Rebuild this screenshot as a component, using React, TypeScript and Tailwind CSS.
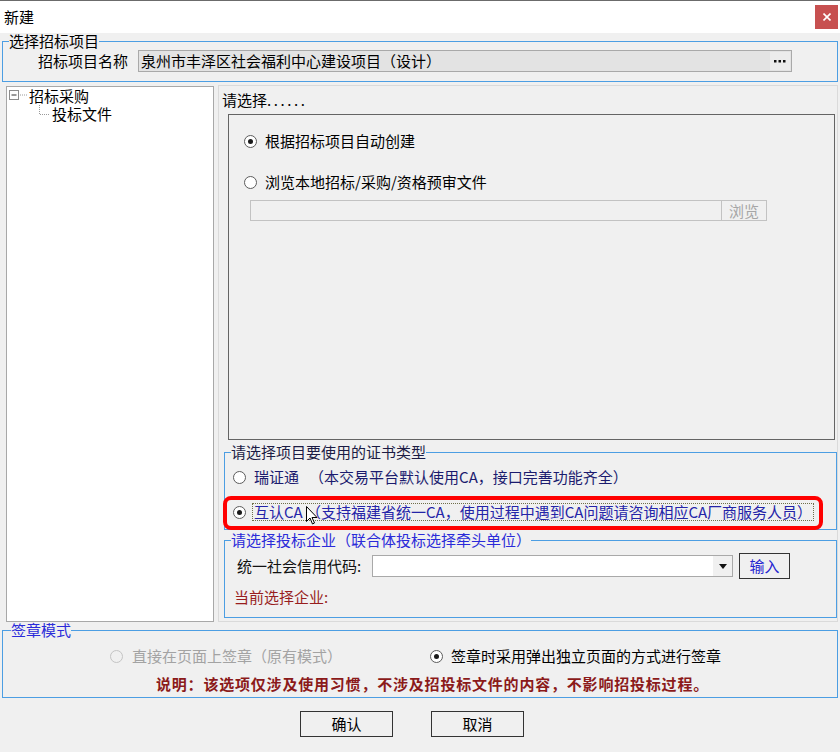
import type { ReactNode } from "react";

function Radio({ checked, disabled }: { checked?: boolean; disabled?: boolean }) {
  return (
    <span
      className={`flex h-[13px] w-[13px] shrink-0 items-center justify-center rounded-full border ${
        disabled ? "border-[#c4c4c4] bg-[#f0f0f0]" : "border-[#5c5c5c] bg-white"
      }`}
    >
      {checked && <span className="h-[5px] w-[5px] rounded-full bg-[#1a1a1a]" />}
    </span>
  );
}

function Group({
  title,
  titleClass,
  className,
  children,
}: {
  title: string;
  titleClass: string;
  className: string;
  children: ReactNode;
}) {
  return (
    <fieldset className={`border border-[#4c9ee3] ${className}`}>
      <legend className={`ml-[6px] text-[15px] leading-[16px] ${titleClass}`}>{title}</legend>
      {children}
    </fieldset>
  );
}

export default function App() {
  return (
    <div className="flex h-[752px] w-[840px] flex-col overflow-hidden border-t border-[#6b6b6b] bg-[#f0f0f0] font-['Noto_Sans_CJK_SC',sans-serif] text-[15px] text-black">
      {/* title bar */}
      <div className="flex h-[32px] items-center justify-between bg-white pl-[4px] pr-[2px]">
        <span className="leading-[16px]">新建</span>
        <div className="flex h-[24px] w-[23px] items-center justify-center bg-[#c75050]">
          <svg width="8" height="8" viewBox="0 0 8 8">
            <path d="M0.5 0.5L7.5 7.5M7.5 0.5L0.5 7.5" stroke="white" strokeWidth="1.6" />
          </svg>
        </div>
      </div>

      <div className="flex flex-1 flex-col px-[2px]">
        {/* project */}
        <Group title="选择招标项目" titleClass="text-black" className="w-[836px]">
          <div className="flex items-center pb-[9px] pl-[35px] pt-[1px]">
            <span className="w-[90px] leading-[16px]">招标项目名称</span>
            <div className="ml-[10px] flex h-[22px] w-[654px] items-center justify-between border border-[#a9a9a9] bg-[#e3e3e3] pl-[2px] pr-[1px]">
              <span className="leading-[16px]">泉州市丰泽区社会福利中心建设项目（设计）</span>
              <div className="flex h-[18px] w-[20px] items-center justify-center bg-[#ececec]">
                <svg width="12" height="3" viewBox="0 0 12 3">
                  <rect x="0" y="0" width="2.5" height="2.5" fill="#111" />
                  <rect x="4.5" y="0" width="2.5" height="2.5" fill="#111" />
                  <rect x="9" y="0" width="2.5" height="2.5" fill="#111" />
                </svg>
              </div>
            </div>
          </div>
        </Group>

        {/* main area */}
        <div className="mt-[3px] flex pl-[4px]">
          <div className="mt-[1px] w-[208px] border border-[#a8a8a8] bg-white">
            <div className="flex h-[17px] items-center pl-[2px]">
              <svg width="19" height="17" viewBox="0 0 19 17">
                <rect x="0.5" y="3.5" width="9" height="9" fill="white" stroke="#8c8c8c" />
                <path d="M2.5 8h5" stroke="#333" />
                <path d="M11 8h7" stroke="#9a9a9a" strokeDasharray="1 1" />
              </svg>
              <span className="ml-[1px] leading-[15px]">招标采购</span>
            </div>
            <div className="mt-[1px] flex h-[17px] items-center pl-[31px]">
              <svg width="12" height="17" viewBox="0 0 12 17">
                <path d="M1.5 0v9.5h10" fill="none" stroke="#9a9a9a" strokeDasharray="1 1" />
              </svg>
              <span className="ml-[2px] leading-[15px]">投标文件</span>
            </div>
          </div>

          <div className="ml-[4px] flex-1 border border-[#dadada] pb-[3px]">
            <div className="pl-[3px] pt-[6px] leading-[16px]">
              请选择<span className="tracking-[2.6px]">......</span>
            </div>

            <div className="ml-[9px] mt-[6px] h-[326px] w-[607px] border border-[#646464]">
              <div className="mt-[16px] flex h-[20px] items-center pl-[15px]">
                <Radio checked />
                <span className="ml-[8px] leading-[16px]">根据招标项目自动创建</span>
              </div>
              <div className="mt-[21px] flex h-[20px] items-center pl-[15px]">
                <Radio />
                <span className="ml-[8px] leading-[16px]">浏览本地招标/采购/资格预审文件</span>
              </div>
              <div className="mt-[8px] flex pl-[21px]">
                <div className="h-[21px] w-[472px] border border-[#c2c2c2] bg-[#f0f0f0]" />
                <div className="flex h-[21px] w-[45px] items-center justify-center border border-l-0 border-[#c2c2c2] leading-[16px] text-[#a6a6a6]">
                  浏览
                </div>
              </div>
            </div>

            {/* certificate type */}
            <Group
              title="请选择项目要使用的证书类型"
              titleClass="text-[#1c1c44]"
              className="ml-[5px] mt-[4px] w-[613px] pb-[7px]"
            >
              <div className="mt-[7px] flex h-[20px] items-center pl-[8px]">
                <Radio />
                <span className="ml-[8px] leading-[16px] text-[#1b1b6e]">
                  瑞证通&nbsp;&nbsp;&nbsp;（本交易平台默认使用CA，接口完善功能齐全）
                </span>
              </div>
              <div className="relative mt-[15px] flex h-[20px] items-center pl-[8px]">
                <Radio checked />
                <span className="ml-[6px] border border-dotted border-[#6e6e4a] px-[1px] leading-[16px] text-[#2424a8]">
                  互认CA&nbsp;（支持福建省统一CA，使用过程中遇到CA问题请咨询相应CA厂商服务人员）
                </span>
                <div className="pointer-events-none absolute left-[-2px] top-[-6px] h-[34px] w-[600px] rounded-[8px] border-[4px] border-[#ff0000]" />
                <svg
                  className="absolute left-[81px] top-[4px]"
                  width="12"
                  height="19"
                  viewBox="0 0 12 19"
                >
                  <path
                    d="M0.5 0.5v15l3.5-3.5 2.5 6 2-1-2.5-5.5h5z"
                    fill="white"
                    stroke="black"
                    strokeWidth="1"
                  />
                </svg>
              </div>
            </Group>

            {/* company */}
            <Group
              title="请选择投标企业（联合体投标选择牵头单位）"
              titleClass="text-[#2b2bd9]"
              className="ml-[5px] mt-[2px] w-[613px] pb-[11px]"
            >
              <div className="mt-[5px] flex h-[26px] items-center pl-[12px]">
                <span className="w-[135px] leading-[16px] text-[#111]">统一社会信用代码:</span>
                <div className="flex h-[22px] w-[361px] items-center justify-end border border-[#a9a9a9] bg-white">
                  <div className="flex h-[20px] w-[19px] items-center justify-center bg-[#f0f0f0]">
                    <svg width="8" height="5" viewBox="0 0 8 5">
                      <path d="M0 0h8L4 5z" fill="#111" />
                    </svg>
                  </div>
                </div>
                <div className="ml-[6px] flex h-[26px] w-[51px] items-center justify-center border border-[#333] leading-[16px] text-[#2525d0]">
                  输入
                </div>
              </div>
              <div className="mt-[9px] h-[18px] pl-[9px] leading-[18px] text-[#981e1e]">当前选择企业:</div>
            </Group>
          </div>
        </div>

        {/* sign mode */}
        <Group title="签章模式" titleClass="text-[#2b2bd9] ml-[8px]" className="w-[836px] pb-[4px]">
          <div className="mt-[8px] flex h-[20px] items-center pl-[107px]">
            <div className="flex w-[320px] items-center">
              <Radio disabled />
              <span className="ml-[9px] leading-[16px] text-[#a3a3a3]">直接在页面上签章（原有模式）</span>
            </div>
            <Radio checked />
            <span className="ml-[8px] leading-[16px]">签章时采用弹出独立页面的方式进行签章</span>
          </div>
          <div className="mt-[9px] h-[18px] pl-[153px] font-bold leading-[18px] tracking-[0.8px] text-[#8b1a1a]">
            说明：该选项仅涉及使用习惯，不涉及招投标文件的内容，不影响招投标过程。
          </div>
        </Group>

        {/* buttons */}
        <div className="mt-[13px] flex pl-[298px]">
          <div className="flex h-[26px] w-[93px] items-center justify-center border border-[#333] leading-[16px]">
            确认
          </div>
          <div className="ml-[38px] flex h-[26px] w-[93px] items-center justify-center border border-[#333] leading-[16px]">
            取消
          </div>
        </div>
      </div>
    </div>
  );
}
